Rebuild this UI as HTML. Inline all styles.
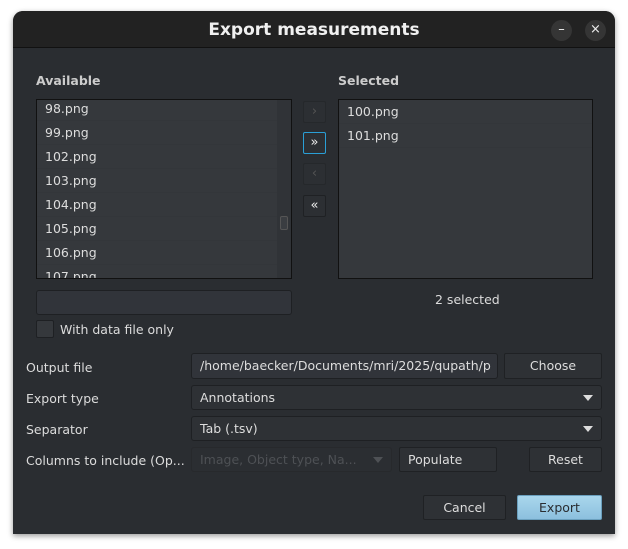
<!DOCTYPE html>
<html><head><style>
*{box-sizing:border-box;margin:0;padding:0}
body{width:628px;height:549px;background:#fff;position:relative;overflow:hidden;font-family:"DejaVu Sans","Liberation Sans",sans-serif;font-size:12.5px;color:#dcdcdc}
.win{position:absolute;left:13px;top:11px;width:602px;height:523px;background:#2a2d31;border-radius:10px 10px 0 0;overflow:hidden;box-shadow:0 2px 6px rgba(0,0,0,.4)}
.tb{position:absolute;left:0;top:0;width:602px;height:37px;background:#222;border-bottom:1px solid #111}
.tt{position:absolute;left:0;width:602px;top:9px;text-align:center;font-weight:bold;font-size:17px;color:#f0f0f0}
.cb{position:absolute;top:9px;width:21px;height:21px;border-radius:50%;background:#353535;color:#eee;text-align:center;font-size:13px;line-height:20px}
.a{position:absolute}
.lbl{font-weight:bold;color:#ccc;font-size:12.5px}
.list{position:absolute;border:1px solid #111;background:#35383c;overflow:hidden}
.row{height:24px;line-height:24px;padding-left:8px;color:#ddd;border-bottom:1px solid #33363a}
.btn{position:absolute;border:1px solid #1f2124;background:#2e3135;border-radius:2px;text-align:center;line-height:24px;color:#ddd}
.fld{position:absolute;border:1px solid #1e2023;background:#31343a;border-radius:3px;line-height:24px;padding-left:8px;color:#ddd}
.arr{position:absolute;right:8px;top:9px;width:0;height:0;border-left:5px solid transparent;border-right:5px solid transparent;border-top:6px solid #ddd}
.sm{position:absolute;left:290px;width:23px;height:22px;border:1px solid #25282b;background:#2c2f33;border-radius:2px;text-align:center;line-height:20px;font-size:13px}
</style></head><body>
<div class="win">
<div class="tb"><div class="tt">Export measurements</div>
<div class="cb" style="left:538px">–</div><div class="cb" style="left:572px">×</div></div>
<div class="a lbl" style="left:23px;top:62px">Available</div>
<div class="a lbl" style="left:325px;top:62px">Selected</div>
<div class="list" style="left:23px;top:88px;width:256px;height:180px">
<div style="margin-top:-3px">
<div class="row">98.png</div><div class="row">99.png</div><div class="row">102.png</div><div class="row">103.png</div><div class="row">104.png</div><div class="row">105.png</div><div class="row">106.png</div><div class="row">107.png</div></div>
<div style="position:absolute;right:0;top:0;width:14px;height:178px;background:#303337"></div>
<div style="position:absolute;right:3px;top:116px;width:8px;height:14px;border:1px solid #555;border-radius:2px;background:#3a3d41"></div>
</div>
<div class="sm" style="top:90px;color:#555">›</div>
<div class="sm" style="top:121px;border-color:#2a9fd6;color:#eee">»</div>
<div class="sm" style="top:152px;color:#555">‹</div>
<div class="sm" style="top:184px;border-color:#1f2124;color:#eee">«</div>
<div class="list" style="left:325px;top:88px;width:255px;height:180px">
<div class="row" style="margin-top:0px">100.png</div><div class="row">101.png</div></div>
<div class="a" style="left:422px;top:281px">2 selected</div>
<div class="fld" style="left:23px;top:279px;width:256px;height:25px"></div>
<div class="a" style="left:23px;top:309px;width:18px;height:18px;border:1px solid #1e2023;background:#35383c;border-radius:2px"></div>
<div class="a" style="left:47px;top:311px">With data file only</div>
<div class="a" style="left:13px;top:349px">Output file</div>
<div class="a" style="left:13px;top:380px">Export type</div>
<div class="a" style="left:13px;top:411px">Separator</div>
<div class="a" style="left:13px;top:442px">Columns to include (Op...</div>
<div class="fld" style="left:178px;top:342px;width:307px;height:26px;white-space:nowrap;overflow:hidden">/home/baecker/Documents/mri/2025/qupath/p</div>
<div class="btn" style="left:491px;top:342px;width:98px;height:26px">Choose</div>
<div class="fld" style="left:178px;top:374px;width:411px;height:25px;background:#2e3135">Annotations<div class="arr"></div></div>
<div class="fld" style="left:178px;top:405px;width:411px;height:25px;background:#2e3135">Tab (.tsv)<div class="arr"></div></div>
<div class="fld" style="left:178px;top:436px;width:201px;height:25px;background:#2b2e32;color:#4e5155;border-color:#27292c">Image, Object type, Na...<div class="arr" style="border-top-color:#4e5155"></div></div>
<div class="btn" style="left:386px;top:436px;width:98px;height:25px;text-align:left;padding-left:8px">Populate</div>
<div class="btn" style="left:516px;top:436px;width:73px;height:25px">Reset</div>
<div class="btn" style="left:410px;top:484px;width:83px;height:25px">Cancel</div>
<div class="btn" style="left:504px;top:484px;width:85px;height:25px;background:linear-gradient(#a9d6ec,#8cc0de);border-color:#6a9fbd;color:#2a2d31">Export</div>
</div>
</body></html>
